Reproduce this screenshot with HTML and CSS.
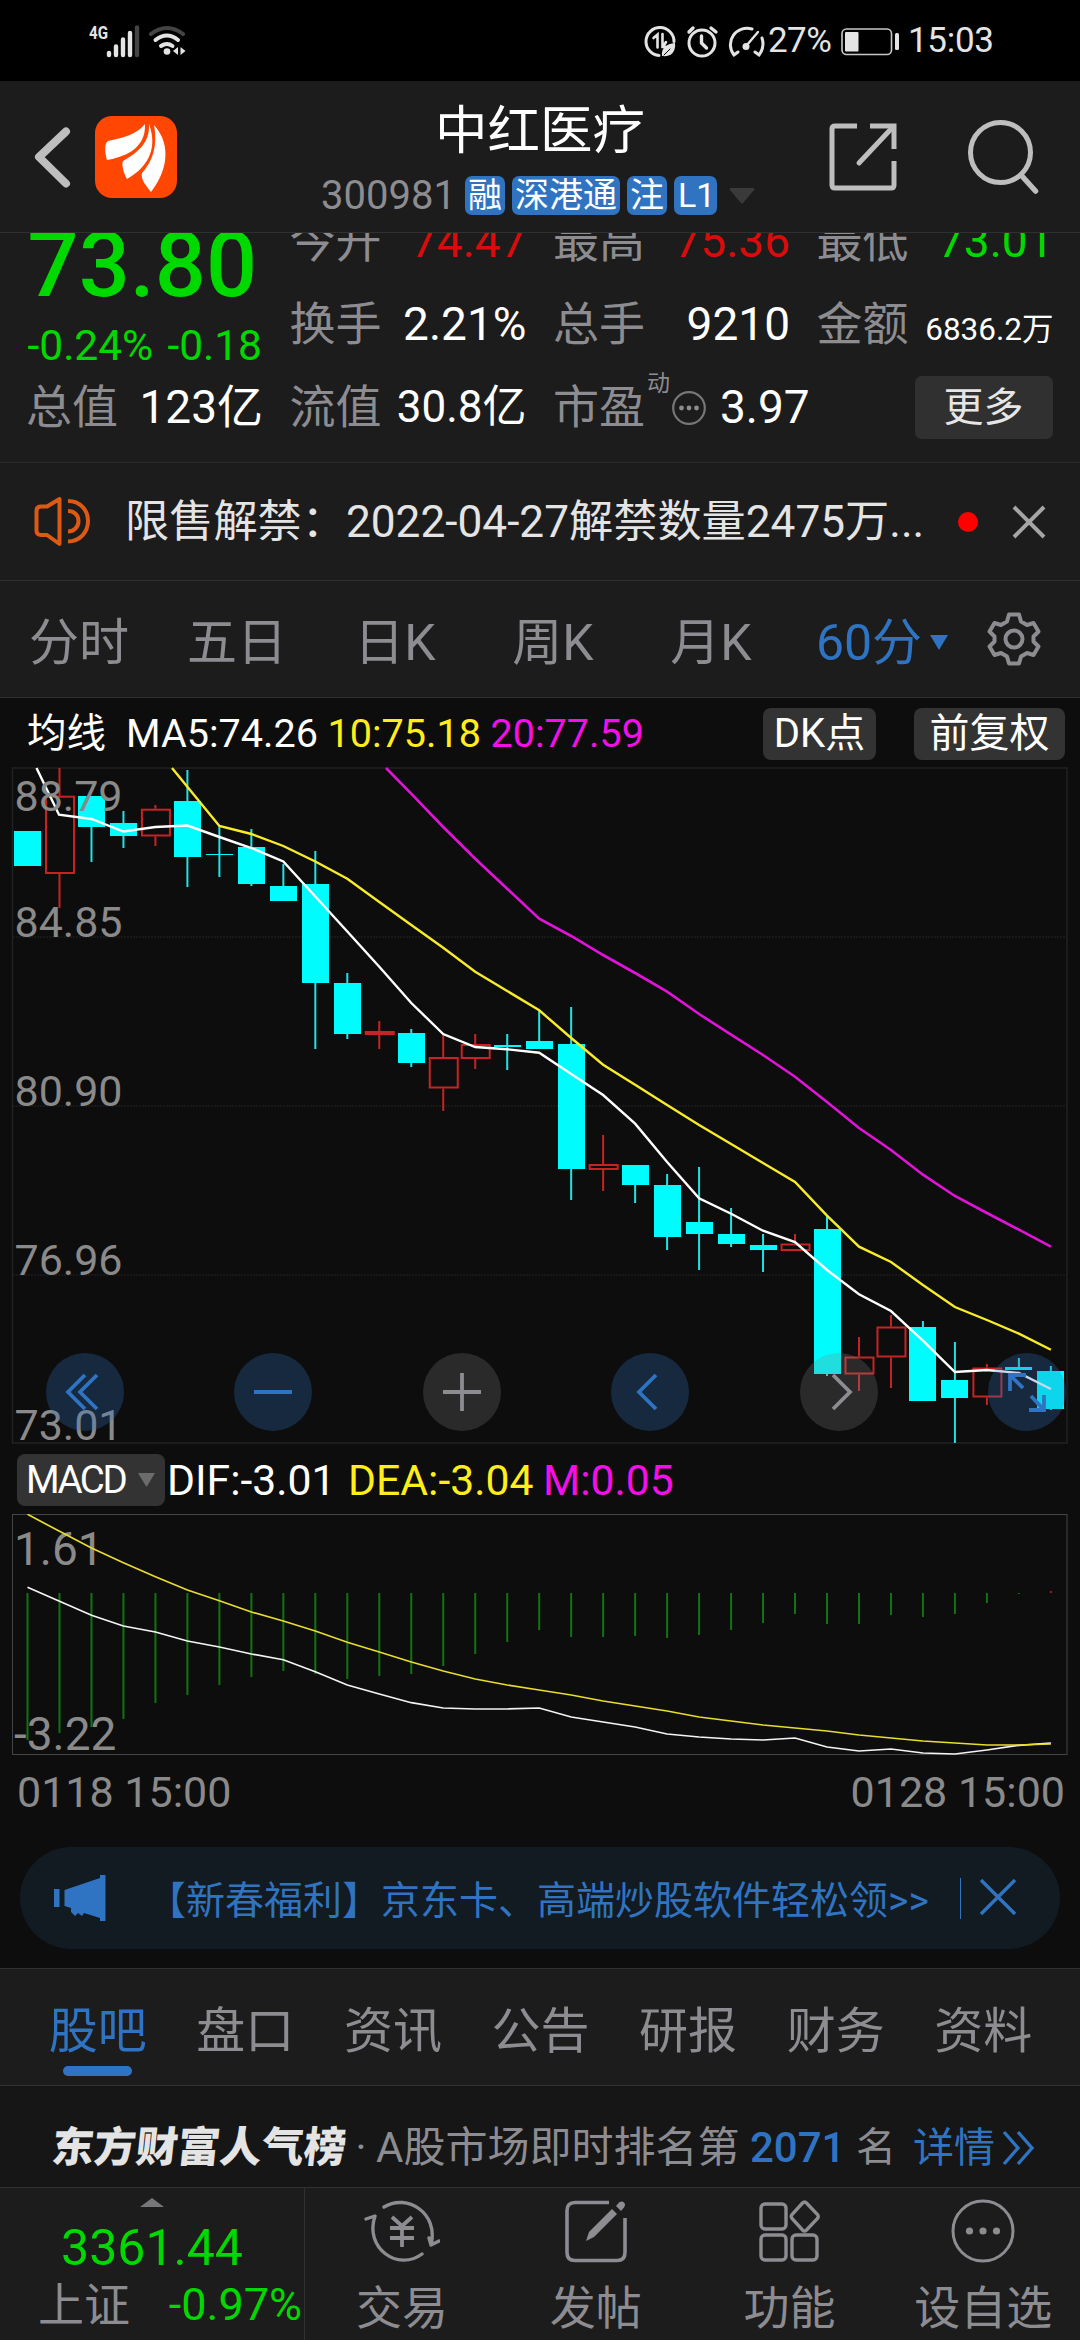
FILE: index.html
```html
<!DOCTYPE html>
<html lang="zh-CN">
<head>
<meta charset="utf-8">
<title>中红医疗 300981</title>
<link rel="stylesheet" href="styles.css">
</head>
<body>
<div class="status">
  <svg class="status-left" width="110" height="44" viewBox="85 20 110 44">
    <text class="net" x="89" y="39" textLength="19" lengthAdjust="spacingAndGlyphs">4G</text>
    <g stroke="#e4e4e4" stroke-width="4.4" stroke-linecap="round">
      <path d="M109 53v2M116 46.500v8.500M123 39.500v15.500M130 33v22"/>
      <path d="M137 27.500v27.500" stroke="#444"/>
    </g>
    <g fill="none" stroke="#e4e4e4" stroke-width="4" stroke-linecap="round">
      <path d="M151 34q16-12 32 0" stroke="#444"/>
      <path d="M155.500 40q11.500-9 22.500 0M161 46q6-4 11.500 0"/>
    </g>
    <circle cx="167" cy="51.500" r="3.300" fill="#e4e4e4"/>
    <path d="M178 47v8l-5-4zM180.500 47v8l5-4z" fill="#e4e4e4"/>
  </svg>
  <div class="status-right">
    <svg width="126" height="40" viewBox="642 20 126 40" fill="none" stroke="#e4e4e4" stroke-width="3" stroke-linecap="round">
      <path d="M659 54.500a14 14 0 1 1 15-14"/>
      <path d="M653.500 37l4-3.500v13M662.500 33v13h3.500M666 41l-3 5" stroke-width="2.600"/>
      <path d="M662 55c-1-8 4-12 13-13 1 9-4 14-13 13z" fill="#e4e4e4" stroke="none"/>
      <path d="M664 54l6-6" stroke="#000" stroke-width="1"/>
      <circle cx="702" cy="42" r="13"/>
      <path d="M701.500 35v7l5 5M689 31l4-4M711 27l5 4" stroke-width="3.400"/>
      <path d="M752 28a16.500 16.500 0 0 0-18 26l4-3M762 37q3 9-3 17l-4-3"/>
      <path d="M747 44l11-13" stroke-width="2.400"/><circle cx="746" cy="45.500" r="3.500" fill="#e4e4e4" stroke="none"/>
    </svg><span class="status-text pct">27%</span>
    <svg width="60" height="30" viewBox="839 25 60 30" fill="none"><rect x="841" y="28" width="49.500" height="25.500" rx="4.500" stroke="#c8c8c8" stroke-width="1.600"/><rect x="844" y="31" width="13.500" height="19.500" rx="1" fill="#e4e4e4"/><rect x="894" y="32" width="4" height="17" rx="1.500" fill="#e4e4e4"/></svg>
    <span class="status-text clock">15:03</span>
  </div>
</div>

<header class="header">
  <div class="header-side">
    <svg class="back" width="40" height="66" viewBox="0 0 40 66"><path d="M34 7.500L7 33l27 26.500" fill="none" stroke="#bebebe" stroke-width="8" stroke-linecap="round" stroke-linejoin="round"/></svg>
    <svg width="82" height="82" viewBox="0 0 82 82"><rect width="82" height="82" rx="17" fill="#ff4602"/><g fill="#fff"><path d="M50 8C42 18 28 22 13 25c-4 2-3 13-1 19 16-3 39-10 38-36z"/><path d="M54 8c1 18-10 28-26 37-2 3 1 13 4 18 18-10 32-28 22-55z"/><path d="M59 9c4 22-2 37-12 48-2 6 5 14 9 19 15-19 22-46 3-67z"/></g></svg>
  </div>
  <div class="header-mid">
    <h1 class="title">中红医疗</h1>
    <div class="codes">
      <span class="code">300981</span>
      <span class="badge">融</span><span class="badge">深港通</span><span class="badge">注</span><span class="badge l1">L1</span>
      <svg class="code-arrow" width="26" height="18" viewBox="0 0 26 18"><path d="M2 1h22q2 0 1 2L14 16q-1 1-2 0L1 3q-1-2 1-2z" fill="#3a3a3a"/></svg>
    </div>
  </div>
  <div class="header-side actions">
    <svg width="68" height="68" viewBox="0 0 68 68" fill="none" stroke="#bebebe" stroke-width="5"><path d="M28 3H6q-3 0-3 3v56q0 3 3 3h56q3 0 3-3V38M41 3h24v23" /><path d="M30 40L62 6" stroke-linecap="round"/></svg>
    <svg width="74" height="76" viewBox="0 0 74 76" fill="none" stroke="#bebebe" stroke-width="5"><circle cx="33.500" cy="33.500" r="30"/><path d="M54 56l14.500 16" stroke-width="5.500" stroke-linecap="round"/></svg>
  </div>
</header>

<section class="quote">
  <div class="quote-grid">
    <div class="price-cell">
      <div class="price">73.80</div>
      <div class="change"><span>-0.24%</span><span>-0.18</span></div>
    </div>
    <div class="stat"><span class="label">今开</span><span class="val up">74.47</span></div>
    <div class="stat"><span class="label">最高</span><span class="val up">75.36</span></div>
    <div class="stat"><span class="label">最低</span><span class="val down">73.01</span></div>
    <div class="stat"><span class="label">换手</span><span class="val">2.21%</span></div>
    <div class="stat"><span class="label">总手</span><span class="val">9210</span></div>
    <div class="stat"><span class="label">金额</span><span class="val small">6836.2万</span></div>
    <div class="stat"><span class="label">总值</span><span class="val">123亿</span></div>
    <div class="stat"><span class="label">流值</span><span class="val mid">30.8亿</span></div>
    <div class="stat pe"><span class="label">市盈</span><sup class="dyn">动</sup>
      <svg width="36" height="36" viewBox="0 0 36 36"><circle cx="18" cy="18" r="15.800" fill="none" stroke="#77777a" stroke-width="2.200"/><g fill="#8c8c91"><circle cx="10.500" cy="18" r="2.400"/><circle cx="18" cy="18" r="2.400"/><circle cx="25.500" cy="18" r="2.400"/></g></svg>
      <span class="val">3.97</span></div>
    <div class="stat more-cell"><button class="more">更多</button></div>
  </div>
</section>

<section class="notice">
  <svg width="60" height="52" viewBox="0 0 60 52" fill="none" stroke="#dc5a14" stroke-width="4"><path d="M8 10.500h6L26.500 3v45L14 39H8q-4.500 0-4.500-4.500V15q0-4.500 4.500-4.500z" stroke-linejoin="round"/><path d="M35 5c12 0 20 9 20 20s-8 20.500-20 20.500M35 15c6 0 10.500 4 10.500 10S41 35.500 35 35.500"/></svg>
  <span class="notice-text">限售解禁：2022-04-27解禁数量2475万...</span>
  <i class="dot"></i>
  <svg width="34" height="34" viewBox="0 0 34 34"><path d="M2 2l30 30M32 2L2 32" stroke="#a5a5a5" stroke-width="4"/></svg>
</section>

<nav class="periods">
  <span class="period">分时</span><span class="period">五日</span><span class="period">日K</span><span class="period">周K</span><span class="period">月K</span>
  <span class="period active">60分<svg class="tri" width="18" height="15" viewBox="0 0 18 15"><path d="M0 0h18L9 15z" fill="#2f74c2"/></svg></span>
  <svg class="gear" width="54" height="54" viewBox="0 0 54 54" fill="none" stroke="#8c8c91" stroke-width="4" stroke-linejoin="round"><path d="M22 2.500h10l2 7 6 3.500 6.500-2 5 8.500-5 5v5l5 5-5 8.500-6.500-2-6 3.500-2 7H22l-2-7-6-3.500-6.500 2-5-8.500 5-5v-5l-5-5 5-8.500 6.500 2 6-3.500z"/><circle cx="27" cy="27" r="8.500"/></svg>
</nav>

<section class="charts">
  <div class="ma-row">
    <span class="ma-name">均线</span><span>MA5:74.26</span><span class="yellow">10:75.18</span><span class="magenta">20:77.59</span>
    <div class="ma-buttons"><button class="chip">DK点</button><button class="chip wide">前复权</button></div>
  </div>
  <div class="kline">
    <svg id="kline" width="1080" height="677" viewBox="0 767 1080 677"></svg>
    <div class="controls">
      <span class="ctl"><svg viewBox="0 0 78 78"><path d="M39 22L22 39l17 17M51 22L34 39l17 17"/></svg></span>
      <span class="ctl"><svg viewBox="0 0 78 78"><path d="M20 39h38"/></svg></span>
      <span class="ctl off"><svg viewBox="0 0 78 78"><path d="M20 39h38M39 20v38"/></svg></span>
      <span class="ctl"><svg viewBox="0 0 78 78"><path d="M45 22L28 39l17 17"/></svg></span>
      <span class="ctl off"><svg viewBox="0 0 78 78"><path d="M33 22l17 17-17 17"/></svg></span>
      <span class="ctl"><svg viewBox="0 0 78 78"><path d="M22 38V22h16M23 23l12 12M56 42v15H41M55 56L43 43"/></svg></span>
    </div>
  </div>
  <div class="macd-row">
    <button class="chip macd-btn"><span class="macd-name">MACD</span><svg width="17" height="14" viewBox="0 0 17 14"><path d="M0 0h17L8.500 14z" fill="#6c6c6c"/></svg></button>
    <span class="dif">DIF:-3.01</span><span class="yellow">DEA:-3.04</span><span class="magenta">M:0.05</span>
  </div>
  <svg id="macd" class="macd" width="1080" height="242" viewBox="0 1514 1080 242"></svg>
  <div class="dates"><span>0118 15:00</span><span>0128 15:00</span></div>
  <div class="banner">
    <svg width="52" height="46" viewBox="0 0 52 46" fill="#2f74c2"><path d="M0 14h5.500v18H0zM10.500 15L46 3V0h5.500v46H46v-3l-16-5-2 3-4-3-3 3-4-4v-4l-6.500-2z"/></svg>
    <span class="banner-text">【新春福利】京东卡、高端炒股软件轻松领&gt;&gt;</span>
    <i class="banner-line"></i>
    <svg width="36" height="38" viewBox="0 0 36 38"><path d="M1 1l34 34M35 1L1 35" stroke="#2f74c2" stroke-width="3.400"/></svg>
  </div>
</section>

<nav class="tabs">
  <span class="tab on">股吧</span><span class="tab">盘口</span><span class="tab">资讯</span><span class="tab">公告</span><span class="tab">研报</span><span class="tab">财务</span><span class="tab">资料</span>
</nav>

<section class="rank">
  <span class="rank-logo">东方财富人气榜</span><span class="rank-sep">·</span><span class="rank-text">A股市场即时排名第</span><b class="rank-no">2071</b><span class="rank-unit">名</span><span class="rank-link">详情</span>
  <svg width="34" height="36" viewBox="0 0 34 36" fill="none" stroke="#2f74c2" stroke-width="3.400"><path d="M2 2l14 16L2 34M16 2l14 16-14 16"/></svg>
</section>

<footer class="bottom">
  <div class="index">
    <svg width="24" height="9" viewBox="0 0 24 9"><path d="M12 0l12 9H0z" fill="#77777a"/></svg>
    <div class="index-val">3361.44</div>
    <div class="index-row"><span class="index-name">上证</span><span>-0.97%</span></div>
  </div>
  <div class="action">
    <svg width="76" height="68" viewBox="0 0 76 68" fill="none" stroke="#8c8c91" stroke-width="3.400" stroke-linecap="round" stroke-linejoin="round"><path d="M20 10C43-4 75 16 67 48l8-4M67 48l-2-7M58 57C34 75 0 51 11 19L2 22"/><path d="M28 20l10 9 10-9M38 29v21M26 31h24M26 41h24" stroke-linecap="butt" stroke-width="3.800"/></svg>
    <span>交易</span>
  </div>
  <div class="action">
    <svg width="62" height="62" viewBox="0 0 62 62" fill="none" stroke="#8c8c91" stroke-width="3.600"><path d="M44 2.500H10q-8 0-8 8v42q0 8 8 8h42q8 0 8-8V18"/><path d="M21 41l3-9 23-23 5 5-23 23z" fill="#8c8c91" stroke="none"/><path d="M51 6l3-3.500q3-2 5 0t0 5L56 11z" fill="#8c8c91" stroke="none"/></svg>
    <span>发帖</span>
  </div>
  <div class="action">
    <svg width="62" height="62" viewBox="0 0 62 62" fill="none" stroke="#8c8c91" stroke-width="3.400"><rect x="3" y="4" width="25" height="25" rx="4"/><rect x="3" y="35" width="25" height="25" rx="4"/><rect x="34" y="35" width="25" height="25" rx="4"/><path d="M44.500 3q2-2 4 0l11 11.500q1.500 2 0 4L48.500 30q-2 2-4 0L34 18.500q-1.500-2 0-4z"/></svg>
    <span>功能</span>
  </div>
  <div class="action">
    <svg width="64" height="64" viewBox="0 0 64 64"><circle cx="32" cy="32" r="30" fill="none" stroke="#8c8c91" stroke-width="3"/><g fill="#8c8c91"><circle cx="18.500" cy="32" r="3.600"/><circle cx="32" cy="32" r="3.600"/><circle cx="45.500" cy="32" r="3.600"/></g></svg>
    <span>设自选</span>
  </div>
</footer>
<script src="charts.js"></script>
</body>
</html>
```

FILE: styles.css
```css
* { box-sizing: border-box; }
body {
  margin: 0;
  width: 1080px;
  height: 2340px;
  overflow: hidden;
  background: #0d0d0d;
  color: #fff;
  font-family: Roboto, "Noto Sans CJK SC", sans-serif;
  white-space: nowrap;
}
svg { display: block; flex: none; }
button { border: 0; padding: 0; margin: 0; color: #fff; font-family: inherit; }
i { display: block; flex: none; }

.status { height: 81px; background: #000; display: flex; justify-content: space-between; padding: 0 88px 0 85px; color: #e4e4e4; }
.status-left { margin-top: 20px; }
.net { font: 700 19px Roboto, sans-serif; fill: #e4e4e4; }
.status-right { display: flex; align-items: center; height: 81px; }
.status-text { font-size: 35px; line-height: 40px; }
.pct { width: 70px; margin-right: 2px; letter-spacing: -0.6px; }
.clock { width: 84px; margin-left: 8px; letter-spacing: -0.3px; }

.header { height: 152px; background: #1c1c1c; border-bottom: 1px solid #303030; display: flex; }
.header-side { width: 300px; display: flex; align-items: center; padding: 1px 0 0 32px; }
.back { margin-right: 23px; }
.header-mid { flex: 1; display: flex; flex-direction: column; align-items: center; }
.title { margin: 20px 0 0; font-size: 52.500px; line-height: 61px; font-weight: 400; }
.codes { display: flex; align-items: center; margin-top: 14px; height: 39px; padding-right: 4px; }
.code { font-size: 40px; line-height: 39px; color: #8c8c91; margin-right: 9px; }
.badge { background: #3074c1; border-radius: 7px; height: 39px; line-height: 38px; font-size: 34px; padding: 0 3px; margin-right: 7px; }
.l1 { padding: 0 4px; width: 43px; }
.code-arrow { margin-left: 5px; }
.actions { justify-content: flex-end; gap: 70px; padding: 0 39px 0 0; }

.quote { height: 230px; background: #1c1c1c; border-bottom: 1px solid #282828; overflow: hidden; }
.quote-grid { margin-top: -33px; padding-left: 26px; display: grid; grid-template-columns: repeat(4, 237px); column-gap: 26.500px; grid-template-rows: repeat(3, 83px); }
.price-cell { grid-row: span 2; padding: 16px 1px 0 1.500px; color: #00d900; }
.price { font-size: 90px; line-height: 100px; font-weight: 500; }
.change { display: flex; justify-content: space-between; font-size: 42.500px; line-height: 41px; margin-top: 9px; }
.stat { display: flex; align-items: center; justify-content: space-between; font-size: 46px; line-height: 83px; }
.label { color: #8c8c91; }
.up { color: #d90c0c; }
.down { color: #00d900; }
.small { font-size: 31.500px; padding-top: 9px; }
.mid { font-size: 44px; }
.pe { justify-content: flex-start; }
.dyn { font-size: 23px; line-height: 24px; color: #8c8c91; align-self: flex-start; margin-top: 6px; }
.pe .dyn { margin-left: 2px; }
.pe svg { margin-left: 1px; }
.pe .val { margin-left: 13px; }
.more-cell { justify-content: flex-end; }
.more { width: 138px; height: 63px; margin-right: 1px; background: #303030; border-radius: 7px; font-size: 40px; line-height: 61px; color: #e6e6e6; }

.notice { height: 118px; background: #1c1c1c; border-bottom: 1px solid #303030; display: flex; align-items: center; padding: 0 34px 0 33px; }
.notice-text { flex: none; margin-left: 32px; width: 833px; font-size: 44.200px; line-height: 60px; color: #e4e4e4; }
.dot { width: 20px; height: 20px; border-radius: 50%; background: #f00; margin: 0 auto 0 0; }

.periods { height: 117px; background: #1c1c1c; border-bottom: 1px solid #303030; display: flex; align-items: center; color: #8c8c91; font-size: 50px; line-height: 60px; }
.period { width: 158px; text-align: center; padding-top: 7px; position: relative; }
.active { color: #2f74c2; }
.tri { position: absolute; left: 140px; top: 29px; }
.gear { margin-left: 39px; }

.charts { height: 1270px; }
.ma-row { height: 69px; display: flex; align-items: center; font-size: 39.600px; line-height: 60px; padding: 2px 15px 0 27px; }
.ma-row > span { margin-right: 9.500px; }
.ma-row > .ma-name { margin-right: 20px; font-size: 39.500px; }
.yellow { color: #ffee1c; }
.magenta { color: #f40fe8; }
.ma-buttons { margin-left: auto; display: flex; gap: 38px; }
.chip { background: #333; border-radius: 8px; height: 52px; width: 113px; font-size: 40px; line-height: 50px; }
.wide { width: 151px; }
.kline { position: relative; height: 677px; }
.controls { position: absolute; left: 46px; right: 14px; top: 586px; display: flex; justify-content: space-between; }
.ctl { width: 78px; height: 78px; border-radius: 50%; background: rgba(48, 116, 193, 0.28); }
.ctl path { fill: none; stroke: #2f74c2; stroke-width: 3.800; }
.off { background: rgba(133, 133, 133, 0.25); }
.off path { stroke: #8c8c91; }
.macd-row { height: 70px; display: flex; align-items: center; font-size: 42.700px; line-height: 60px; padding: 1px 0 0 17px; }
.macd-btn { width: 148px; display: flex; align-items: center; padding-left: 9px; margin-right: 2px; }
.macd-name { font-size: 38.500px; letter-spacing: -2.500px; width: 112px; text-align: left; }
.dif { width: 181px; }
.macd-row .yellow { width: 195px; }
.macd { height: 242px; }
.dates { height: 73px; display: flex; justify-content: space-between; align-items: center; padding: 0 15px 2px 17px; font-size: 43px; line-height: 60px; color: #8a8a8a; }
.banner { height: 102px; margin: 18px 20px 0; border-radius: 51px; background: #121a22; display: flex; align-items: center; padding: 0 44px 0 34px; color: #3074c1; }
.banner-text { font-size: 39px; line-height: 60px; margin-left: 41px; width: 813px; padding-top: 5px; }
.banner-line { width: 1px; height: 41px; background: #2f74c2; margin-right: 19px; }
.axis { font: 43px Roboto, sans-serif; fill: #8a8a8a; }
.axis-lg { font: 46px Roboto, sans-serif; fill: #8a8a8a; }

.tabs { height: 118px; background: #1c1c1c; border-top: 1px solid #303030; border-bottom: 1px solid #303030; display: flex; padding: 0 23px 0 24px; color: #8c8c91; font-size: 49px; line-height: 126px; }
.tab { flex: 1; text-align: center; position: relative; }
.on { color: #2f74c2; }
.on::after { content: ""; position: absolute; left: 39px; top: 97px; width: 69px; height: 10px; border-radius: 5px; background: #2f74c2; }

.rank { height: 101px; background: #161616; display: flex; align-items: center; padding: 22px 0 0 52px; font-size: 42px; line-height: 60px; color: #8c8c91; }
.rank-logo { width: 294px; font-size: 42px; font-weight: 900; color: #e4e4e4; transform: skewX(-6deg); }
.rank-sep { width: 30px; text-align: center; }
.rank-text { width: 374px; }
.rank-no { font-weight: 500; color: #2f74c2; width: 106px; }
.rank-unit { width: 57px; font-size: 40px; }
.rank-link { width: 89px; color: #2f74c2; font-size: 41px; }

.bottom { height: 153px; background: #1c1c1c; border-top: 1px solid #303030; display: flex; color: #8c8c91; }
.index { width: 305px; border-right: 1px solid #303030; display: flex; flex-direction: column; align-items: center; padding-top: 10px; color: #00d900; }
.index-val { font-size: 50px; line-height: 60px; margin-top: 11px; }
.index-row { display: flex; justify-content: space-between; align-self: stretch; padding: 0 2px 0 38px; font-size: 45px; line-height: 60px; margin-top: -3px; }
.index-name { color: #8c8c91; font-size: 46px; }
.action { flex: 1; display: flex; flex-direction: column; align-items: center; font-size: 46px; line-height: 60px; }
.action svg { height: 68px; margin-top: 9px; }
.action span { margin-top: 13px; }
```

FILE: charts.js
```js
// Candles: [direction, body top, body bottom, wick top, wick bottom]
const candles = [
  [0,831,866,831,866],[1,795.7,874,768,908],[0,796,827,796,862],[0,823,836,811,848],
  [1,808.7,836.5,805,846],[0,801,857,770,887],[0,854,855,826,877],[0,847,884,829,886],
  [0,886,901,864,901],[0,884,983,851,1049],[0,983,1034,973,1039],[1,1031,1035,1021,1049],
  [0,1033,1063,1029,1067],[1,1057,1088.5,1035,1111],[1,1044,1059,1034,1069],[0,1045,1047,1034,1070],
  [0,1041,1049,1010,1049],[0,1044,1169,1007,1200],[1,1164,1170,1135,1191],[0,1165,1185,1165,1203],
  [0,1185,1237,1174,1250],[0,1222,1234,1167,1270],[0,1234,1244,1208,1247],[0,1245,1250,1234,1272],
  [1,1243.5,1251,1234,1251],[0,1229,1374,1216,1376],[1,1356.500,1374.500,1337,1391],[1,1326.500,1357.500,1315,1388],
  [0,1327,1401,1321,1401],[0,1380,1398,1342,1443],[1,1367.500,1397.500,1364,1405],[0,1367,1370,1358,1370],
  [0,1371,1409,1366,1410]
];
const ma5 = [[36.5,768],[59,814.7],819,831.5,827,825.5,837,848,861.5,896.5,931.5,966.7,1003,1034,1047,1049.3,1052.7,1074,1095,1123.7,1162,1198.3,1213.7,1230.7,1242,1270,1294.3,1311,1340.7,1372,1370,1373,1389];
const ma10 = [[172,768],[219.4,826],834,846,861.5,878.7,902,925,947.7,971.7,991,1010.3,1038,1064.7,1084.7,1105,1125,1144,1163,1182,1215.7,1246.7,1262,1285,1307,1320,1333.7,1349.7];
const ma20 = [[386,768],[411.2,793.7],827,858.7,888.7,918.7,936,955,973,991.7,1014,1034.7,1055,1076.7,1102,1128,1150,1174.7,1196,1213,1229.7,1246.7];
const dif = [1587.3,1601.3,1615.3,1626,1632,1641,1647,1654,1659.7,1671.7,1685,1694,1702.7,1708,1709,1709,1708,1717,1722,1727,1734,1737,1739,1740,1738,1747,1751,1749,1753,1754,1750,1745.3,1743];
const dea = [1514.3,1531.3,1548,1562.7,1576.7,1590,1600.7,1612,1621,1631,1642.3,1652,1662,1671,1679,1685,1690,1695,1701,1706,1711,1717,1721,1725,1728,1731,1735,1738,1741,1743,1745,1745,1744];
const bars = [1740,1733,1727,1719,1703,1695,1685,1677,1671,1674,1679,1676,1674,1666,1654,1642,1630,1637,1637,1636,1638,1635,1630,1623,1614,1624,1624,1615,1617,1614,1603,1594];

const step = 31.98;
const x = i => 27.5 + step * i;
// Series values without an x are aligned to the candles, counted back from the last one.
function line(points, color, width) {
  const last = 32;
  const d = points.map((p, k) => {
    const px = Array.isArray(p) ? p[0] : x(last - (points.length - 1 - k));
    const py = Array.isArray(p) ? p[1] : p;
    return px.toFixed(1) + "," + py;
  }).join(" ");
  return `<polyline points="${d}" fill="none" stroke="${color}" stroke-width="${width}"/>`;
}
const label = (cls, tx, ty, t) => `<text class="${cls}" x="${tx}" y="${ty}">${t}</text>`;

let k = '<rect x="12.500" y="768" width="1054.500" height="675" fill="none" stroke="#222" stroke-width="1.500"/>';
for (const y of [937, 1106, 1275]) k += `<path d="M13 ${y}H1067" stroke="#1c1c1c" stroke-width="1.500" stroke-dasharray="2 1"/>`;
candles.forEach(([up, t, b, hi, lo], i) => {
  const cx = x(i);
  if (up) {
    k += `<path d="M${cx} ${hi}V${t}M${cx} ${b}V${lo}" stroke="#c62424" stroke-width="2"/>`;
    k += `<rect x="${cx - 13.5}" y="${t + 1}" width="28" height="${b - t - 2}" fill="none" stroke="#c62424" stroke-width="2"/>`;
  } else {
    k += `<path d="M${cx} ${hi}V${lo}" stroke="#1fe4e4" stroke-width="2"/>`;
    k += `<rect x="${(cx - 13.5).toFixed(0)}" y="${t}" width="27" height="${b - t}" fill="#00fcfc"/>`;
  }
});
k += line(ma5, "#fff", 2.4) + line(ma10, "#f8ec28", 2.4) + line(ma20, "#e014d8", 2.6);
k += label("axis", 14.5, 810.5, "88.79") + label("axis", 14.5, 937, "84.85") + label("axis", 14.5, 1105.5, "80.90") + label("axis", 14.5, 1274.500, "76.96") + label("axis", 14.5, 1440, "73.01");
document.getElementById("kline").innerHTML = k;

let m = '<rect x="12.500" y="1514.500" width="1054.500" height="240" fill="none" stroke="#444"/>';
m += label("axis-lg", 14, 1565, "1.61") + label("axis-lg", 14, 1750, "-3.22");
bars.forEach((b, i) => { m += `<path d="M${x(i)} 1593V${b}" stroke="#127312" stroke-width="2"/>`; });
m += `<path d="M${x(32)} 1591V1593" stroke="#a02020" stroke-width="2"/>`;
m += line(dif, "#f4f4f4", 1.700) + line(dea, "#e8dc30", 1.700);
document.getElementById("macd").innerHTML = m;
```
